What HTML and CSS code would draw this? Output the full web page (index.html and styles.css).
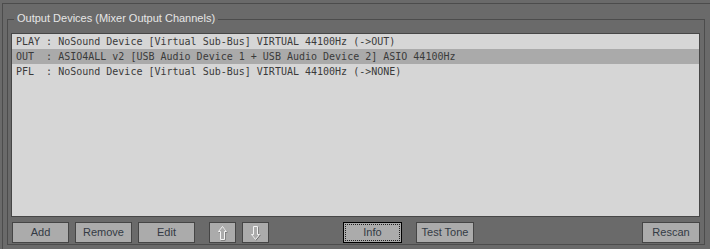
FILE: index.html
```html
<!DOCTYPE html>
<html lang="en">
<head>
    <meta charset="UTF-8">
    <title>Output Devices</title>
    <link rel="stylesheet" href="styles.css">
</head>
<body>
    <div class="frame">
        <div class="group">
            <div class="group-title">Output Devices (Mixer Output Channels)</div>
            <div class="device-list">
                <div class="row">PLAY : NoSound Device [Virtual Sub-Bus] VIRTUAL 44100Hz (-&gt;OUT)</div>
                <div class="row selected">OUT  : ASIO4ALL v2 [USB Audio Device 1 + USB Audio Device 2] ASIO 44100Hz</div>
                <div class="row">PFL  : NoSound Device [Virtual Sub-Bus] VIRTUAL 44100Hz (-&gt;NONE)</div>
            </div>
            <div class="button-bar">
                <button class="btn">Add</button>
                <button class="btn">Remove</button>
                <button class="btn">Edit</button>
                <button class="btn btn-icon move-up" title="Move up">
                    <svg width="11" height="16" viewBox="0 0 11 16">
                        <polygon points="5.5,1.5 1.5,6.5 3.5,6.5 3.5,14.5 7.5,14.5 7.5,6.5 9.5,6.5" fill="none" stroke="#6e6e6e" transform="translate(0.7,0.7)"/>
                        <polygon points="5.5,1.5 1.5,6.5 3.5,6.5 3.5,14.5 7.5,14.5 7.5,6.5 9.5,6.5" fill="#ababab" stroke="#f4f4f4"/>
                    </svg>
                </button>
                <button class="btn btn-icon move-down" title="Move down">
                    <svg width="11" height="16" viewBox="0 0 11 16">
                        <polygon points="5.5,14.5 1.5,9.5 3.5,9.5 3.5,1.5 7.5,1.5 7.5,9.5 9.5,9.5" fill="none" stroke="#6e6e6e" transform="translate(0.7,0.7)"/>
                        <polygon points="5.5,14.5 1.5,9.5 3.5,9.5 3.5,1.5 7.5,1.5 7.5,9.5 9.5,9.5" fill="#ababab" stroke="#f4f4f4"/>
                    </svg>
                </button>
                <button class="btn btn-focus info">Info</button>
                <button class="btn test-tone">Test Tone</button>
                <button class="btn rescan">Rescan</button>
            </div>
        </div>
    </div>
</body>
</html>
```

FILE: styles.css
```css
:root {
    --bg-color: #6a6a6a;
    --line-color: #4c4c4c;
    --list-color: #d6d6d6;
    --select-color: #aaaaaa;
    --button-color: #ababab;
    --text-color: #3a3a3a;
}
body {
    margin: 0;
    background: var(--bg-color);
    font-family: "Liberation Sans", Arial, sans-serif;
    overflow: hidden;
}
.frame {
    margin: 3px 0 0 2px;
    height: 245px;
    border-top: 1px solid var(--line-color);
    border-left: 1px solid var(--line-color);
}
.group {
    margin: 15px 0 0 4px;
    width: 698px;
    height: 226px;
    box-sizing: border-box;
    padding: 0 4px 0 3px;
    border: 1px solid var(--line-color);
}
.group-title {
    width: fit-content;
    margin: -8px 0 0 3px;
    padding: 0 3px;
    height: 13px;
    line-height: 13px;
    font-size: 11px;
    color: #e6e6e6;
    background: var(--bg-color);
}
.device-list {
    margin-top: 8px;
    height: 184px;
    box-sizing: border-box;
    border: 1px solid #464646;
    background: var(--list-color);
}
.row {
    height: 15px;
    line-height: 15px;
    padding-left: 4px;
    white-space: pre;
    font-family: "DejaVu Sans Mono", "Liberation Mono", monospace;
    font-size: 10px;
    color: var(--text-color);
}
.row.selected {
    background: var(--select-color);
}
.button-bar {
    display: flex;
    margin-top: 5px;
    padding-left: 1px;
}
.btn {
    width: 57px;
    height: 21px;
    margin: 0 6px 0 0;
    padding: 0;
    box-sizing: border-box;
    border: 1px solid #454545;
    background: var(--button-color);
    color: #333a44;
    font-family: "Liberation Sans", Arial, sans-serif;
    font-size: 11px;
    line-height: 19px;
    cursor: pointer;
}
.btn-icon {
    width: 27px;
    display: flex;
    align-items: center;
    justify-content: center;
}
.move-up {
    margin-left: 8px;
}
.btn-focus {
    border-color: #000000;
    outline: 1px dotted #202020;
    outline-offset: -3px;
}
.info {
    margin-left: 68px;
    width: 59px;
}
.test-tone {
    margin-left: 8px;
    width: 58px;
}
.rescan {
    margin: 0 0 0 auto;
    width: 58px;
}
```
